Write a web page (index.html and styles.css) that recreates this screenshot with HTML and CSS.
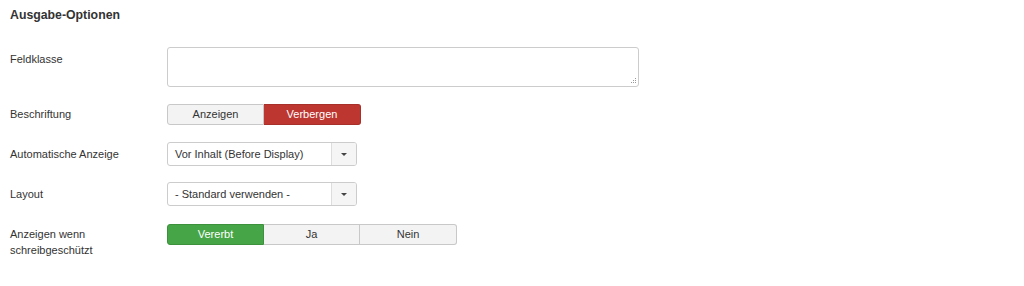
FILE: index.html
```html
<!DOCTYPE html>
<html lang="de">
<head>
<meta charset="utf-8">
<title>Ausgabe-Optionen</title>
<link rel="stylesheet" href="styles.css">
</head>
<body>
<div class="panel">
  <h3 class="title">Ausgabe-Optionen</h3>

  <div class="group">
    <label class="label">Feldklasse</label>
    <div class="controls">
      <div class="textarea"><span class="grip"></span></div>
    </div>
  </div>

  <div class="group">
    <label class="label label-mid">Beschriftung</label>
    <div class="controls">
      <div class="btn-group">
        <span class="btn">Anzeigen</span>
        <span class="btn btn-danger">Verbergen</span>
      </div>
    </div>
  </div>

  <div class="group group-tight">
    <label class="label label-sel">Automatische Anzeige</label>
    <div class="controls">
      <div class="select"><span class="select-text">Vor Inhalt (Before Display)</span><span class="select-arrow"><span class="caret"></span></span></div>
    </div>
  </div>

  <div class="group group-loose">
    <label class="label label-sel">Layout</label>
    <div class="controls">
      <div class="select"><span class="select-text">- Standard verwenden -</span><span class="select-arrow"><span class="caret"></span></span></div>
    </div>
  </div>

  <div class="group">
    <label class="label label-mid">Anzeigen wenn<br>schreibgeschützt</label>
    <div class="controls">
      <div class="btn-group">
        <span class="btn btn-success">Vererbt</span>
        <span class="btn">Ja</span>
        <span class="btn">Nein</span>
      </div>
    </div>
  </div>
</div>
</body>
</html>
```

FILE: styles.css
```css
* { box-sizing: border-box; }
html, body { margin: 0; padding: 0; background: #fff; }
body {
  font-family: "Liberation Sans", Arial, sans-serif;
  font-size: 11px;
  color: #333;
}
.panel { padding: 7px 10px 0 10px; }
.title {
  margin: 0 0 24px 0;
  font-size: 12.3px;
  line-height: 16px;
  font-weight: bold;
  color: #333;
}
.group {
  display: grid;
  grid-template-columns: 157px 1fr;
  margin-bottom: 17px;
}
.group-tight { margin-bottom: 16px; }
.group-loose { margin-bottom: 18px; }
.label {
  display: block;
  line-height: 16px;
  padding-top: 4px;
  color: #333;
}
.label-mid { padding-top: 2px; }
.label-sel { padding-top: 4px; }
.controls { display: flex; align-items: flex-start; }

.textarea {
  position: relative;
  width: 472px;
  height: 40px;
  border: 1px solid #ccc;
  border-radius: 3px;
  background: #fff;
}
.grip {
  position: absolute;
  right: 2px;
  bottom: 2px;
  width: 6px;
  height: 6px;
  background:
    linear-gradient(#999, #999) 5px 0 / 1px 1px no-repeat,
    linear-gradient(#999, #999) 5px 2px / 1px 1px no-repeat,
    linear-gradient(#999, #999) 3px 2px / 1px 1px no-repeat,
    linear-gradient(#999, #999) 5px 4px / 1px 1px no-repeat,
    linear-gradient(#999, #999) 3px 4px / 1px 1px no-repeat,
    linear-gradient(#999, #999) 1px 4px / 1px 1px no-repeat;
}

.btn-group { display: flex; }
.btn {
  display: block;
  width: 96px;
  height: 21px;
  line-height: 19px;
  text-align: center;
  background: #f3f3f3;
  border: 1px solid #c8c8c8;
  border-left-width: 0;
  color: #333;
}
.btn:first-child { border-left-width: 1px; border-radius: 3px 0 0 3px; width: 97px; }
.btn:last-child { border-radius: 0 3px 3px 0; width: 97px; }
.btn-danger {
  background: #bd362f;
  border-color: #a8302a;
  color: #fff;
}
.btn-success {
  background: #46a546;
  border-color: #3d913d;
  color: #fff;
}

.select {
  display: flex;
  width: 190px;
  height: 24px;
  border: 1px solid #ccc;
  border-radius: 3px;
  background: #fff;
  overflow: hidden;
}
.select-text {
  flex: 1;
  line-height: 22px;
  padding-left: 7px;
  color: #333;
}
.select-arrow {
  width: 25px;
  border-left: 1px solid #ddd;
  background: #f5f5f5;
  display: flex;
  align-items: center;
  justify-content: center;
}
.caret {
  width: 0;
  height: 0;
  border-left: 3px solid transparent;
  border-right: 3px solid transparent;
  border-top: 3px solid #444;
}
```
